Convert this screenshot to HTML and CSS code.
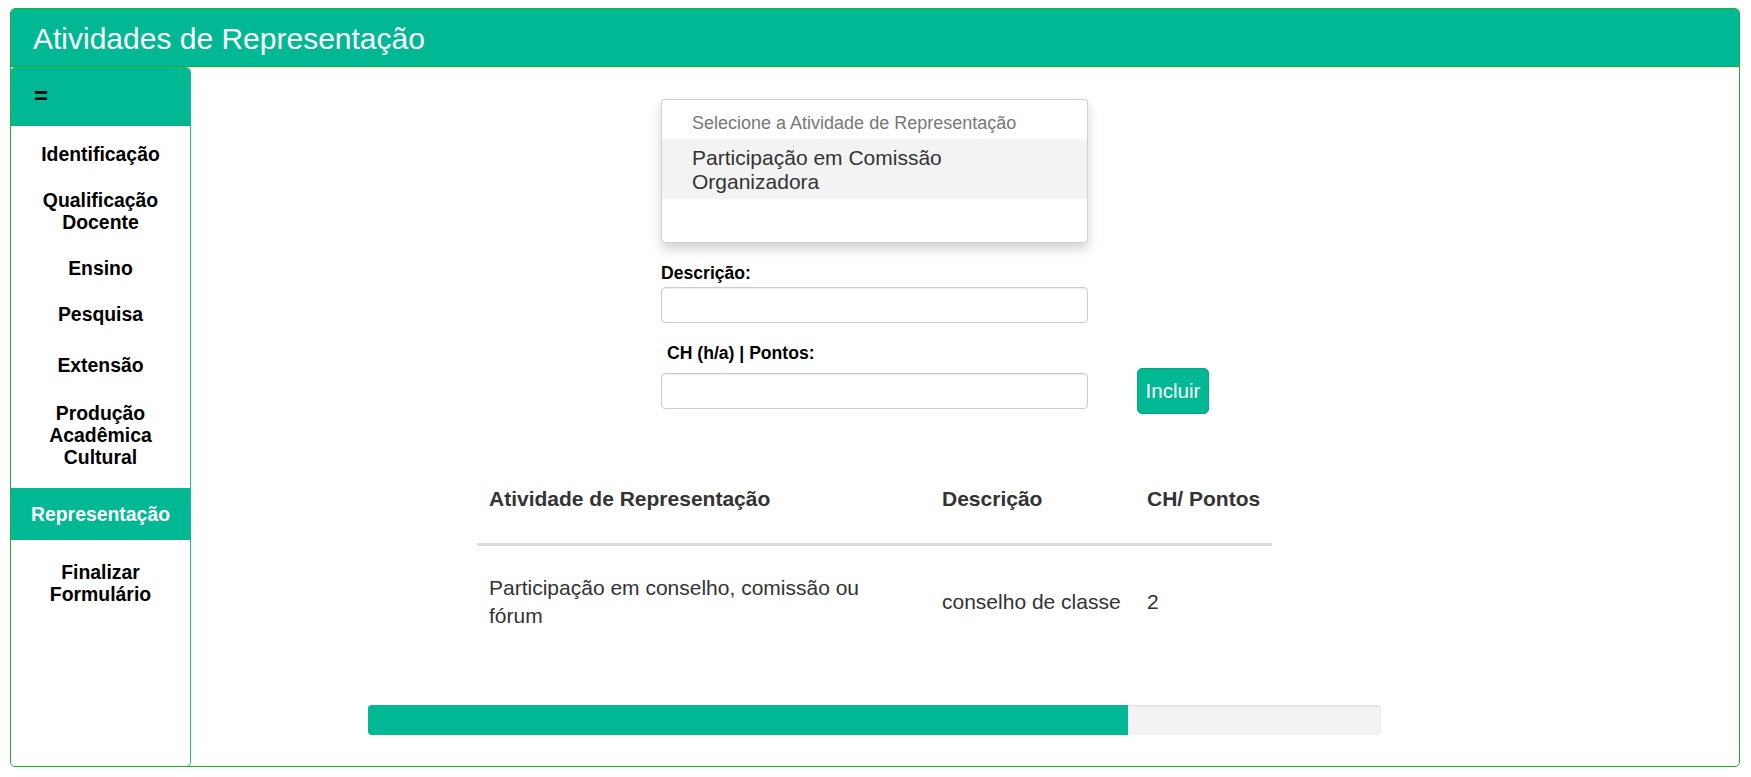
FILE: index.html
```html
<!DOCTYPE html>
<html lang="pt-BR">
<head>
<meta charset="utf-8">
<title>Atividades de Representação</title>
<link rel="stylesheet" href="styles.css">
</head>
<body>
<div class="page">
  <div class="panel">
    <div class="panel-head">Atividades de Representação</div>
    <div class="panel-body">
      <aside class="sidebar">
        <div class="sidebar-head">=</div>
        <ul class="menu">
          <li class="menu-item">Identificação</li>
          <li class="menu-item">Qualificação Docente</li>
          <li class="menu-item">Ensino</li>
          <li class="menu-item">Pesquisa</li>
          <li class="menu-item menu-item-ext">Extensão</li>
          <li class="menu-item menu-item-prod">Produção Acadêmica Cultural</li>
          <li class="menu-item active">Representação</li>
          <li class="menu-item">Finalizar Formulário</li>
        </ul>
      </aside>
      <main class="main">
        <div class="form-grid">
          <div class="dropdown">
            <div class="dd-placeholder">Selecione a Atividade de Representação</div>
            <div class="dd-option">Participação em Comissão Organizadora</div>
          </div>
          <label class="label label-desc">Descrição:</label>
          <input class="input" type="text">
          <label class="label label-ch">CH (h/a) | Pontos:</label>
          <div class="input-row-input"><input class="input" type="text"></div>
          <div class="input-row-btn"><button class="btn">Incluir</button></div>
        </div>
        <table class="table">
          <thead>
            <tr>
              <th class="c1">Atividade de Representação</th>
              <th class="c2">Descrição</th>
              <th class="c3">CH/ Pontos</th>
            </tr>
          </thead>
          <tbody>
            <tr>
              <td class="c1">Participação em conselho, comissão ou fórum</td>
              <td class="c2">conselho de classe</td>
              <td class="c3">2</td>
            </tr>
          </tbody>
        </table>
        <div class="progress"><div class="progress-bar" style="width:75%"></div></div>
      </main>
    </div>
  </div>
</div>
</body>
</html>
```
FILE: styles.css
```css
* { box-sizing: border-box; }
html, body { margin: 0; padding: 0; background: #fff; }
body {
  font-family: "Liberation Sans", Arial, Helvetica, sans-serif;
  color: #000;
}
.page {
  padding: 8px 11px 10px 10px;
  height: 777px;
}
.panel {
  height: 759px;
  border: 1px solid #22b02a;
  border-radius: 5px;
  display: flex;
  flex-direction: column;
  overflow: hidden;
}
.panel-head {
  height: 58px;
  background: #00b894;
  border-bottom: 1px solid #17a83a;
  color: #fff;
  font-size: 30px;
  line-height: 34px;
  padding: 13px 22px 0;
  flex: none;
}
.panel-body {
  flex: 1;
  display: flex;
  min-height: 0;
}
.sidebar {
  width: 181px;
  flex: none;
  margin-left: -1px;
  margin-bottom: -1px;
  border: 1px solid #1fb98a;
  border-radius: 5px;
  background: #fff;
  overflow: hidden;
}
.sidebar-head {
  height: 58px;
  background: #00b894;
  border-bottom: 1px solid #12ab6e;
  font-weight: bold;
  font-size: 24px;
  line-height: 26px;
  padding: 15px 0 0 23px;
}
.menu {
  list-style: none;
  margin: 0;
  padding: 5px 0 0;
}
.menu-item {
  text-align: center;
  font-weight: bold;
  font-size: 19.4px;
  line-height: 22px;
  padding: 12px 6px;
  color: #000;
}
.menu-item-ext { margin-top: 5px; }
.menu-item-prod { margin-top: 2px; }
.menu-item.active {
  background: #00b894;
  color: #fff;
  padding: 15px 6px;
  margin: 8px 0 9px;
}
.main {
  flex: 1;
  padding: 32px 181px 0 0;
  display: flex;
  flex-direction: column;
  align-items: center;
}
.form-grid {
  width: 100%;
  display: grid;
  grid-template-columns: 1fr 427px 1fr;
}
.form-grid > .dropdown,
.form-grid > .label,
.form-grid > .input,
.form-grid > .input-row-input { grid-column: 2; }
.dropdown {
  height: 144px;
  border: 1px solid rgba(0,0,0,.18);
  border-radius: 4px;
  box-shadow: 0 6px 12px rgba(0,0,0,.175);
  background: #fff;
}
.dd-placeholder {
  color: #777;
  font-size: 18px;
  line-height: 20px;
  padding: 13px 30px 6px;
  height: 39px;
}
.dd-option {
  background: #f3f3f3;
  color: #333;
  font-size: 21px;
  line-height: 24px;
  padding: 7px 80px 5px 30px;
  height: 60px;
}
.label {
  display: block;
  font-weight: bold;
  font-size: 17.6px;
  line-height: 20px;
  color: #000;
}
.label-desc { margin-top: 20px; margin-bottom: 4px; }
.label-ch { margin-top: 20px; margin-bottom: 5px; padding-left: 6px; }
.input {
  display: block;
  width: 427px;
  height: 36px;
  border: 1px solid #ccc;
  border-radius: 4px;
  box-shadow: inset 0 1px 1px rgba(0,0,0,.075);
  background: #fff;
  font: inherit;
  margin: 0;
}
.input-row-input {
  height: 46px;
  display: flex;
  align-items: center;
  grid-row: 5;
}
.input-row-btn {
  grid-column: 3;
  grid-row: 5;
  padding-left: 49px;
}
.btn {
  height: 46px;
  width: 72px;
  padding: 0;
  background: #00b894;
  border: 1px solid #05a585;
  border-radius: 5px;
  color: #fff;
  font-family: "Liberation Sans", Arial, sans-serif;
  font-size: 20.6px;
  line-height: 24px;
}
.table {
  width: 795px;
  margin-top: 41px;
  border-collapse: collapse;
  table-layout: fixed;
  color: #333;
  font-size: 21px;
}
.table th {
  font-weight: bold;
  line-height: 30px;
  text-align: left;
  padding: 29px 12px 29px;
  border-bottom: 3px solid #ddd;
  white-space: nowrap;
}
.table td {
  line-height: 28px;
  padding: 28px 12px;
  vertical-align: middle;
}
.table .c1 { width: 453px; padding-right: 40px; }
.table .c2 { width: 205px; white-space: nowrap; }
.table .c3 { width: 137px; }
.progress {
  width: 1013px;
  height: 30px;
  margin-top: 47px;
  background: #f3f3f3;
  border-radius: 4px;
  box-shadow: inset 0 1px 2px rgba(0,0,0,.1);
  overflow: hidden;
}
.progress-bar {
  height: 100%;
  background: #00b894;
}
```
